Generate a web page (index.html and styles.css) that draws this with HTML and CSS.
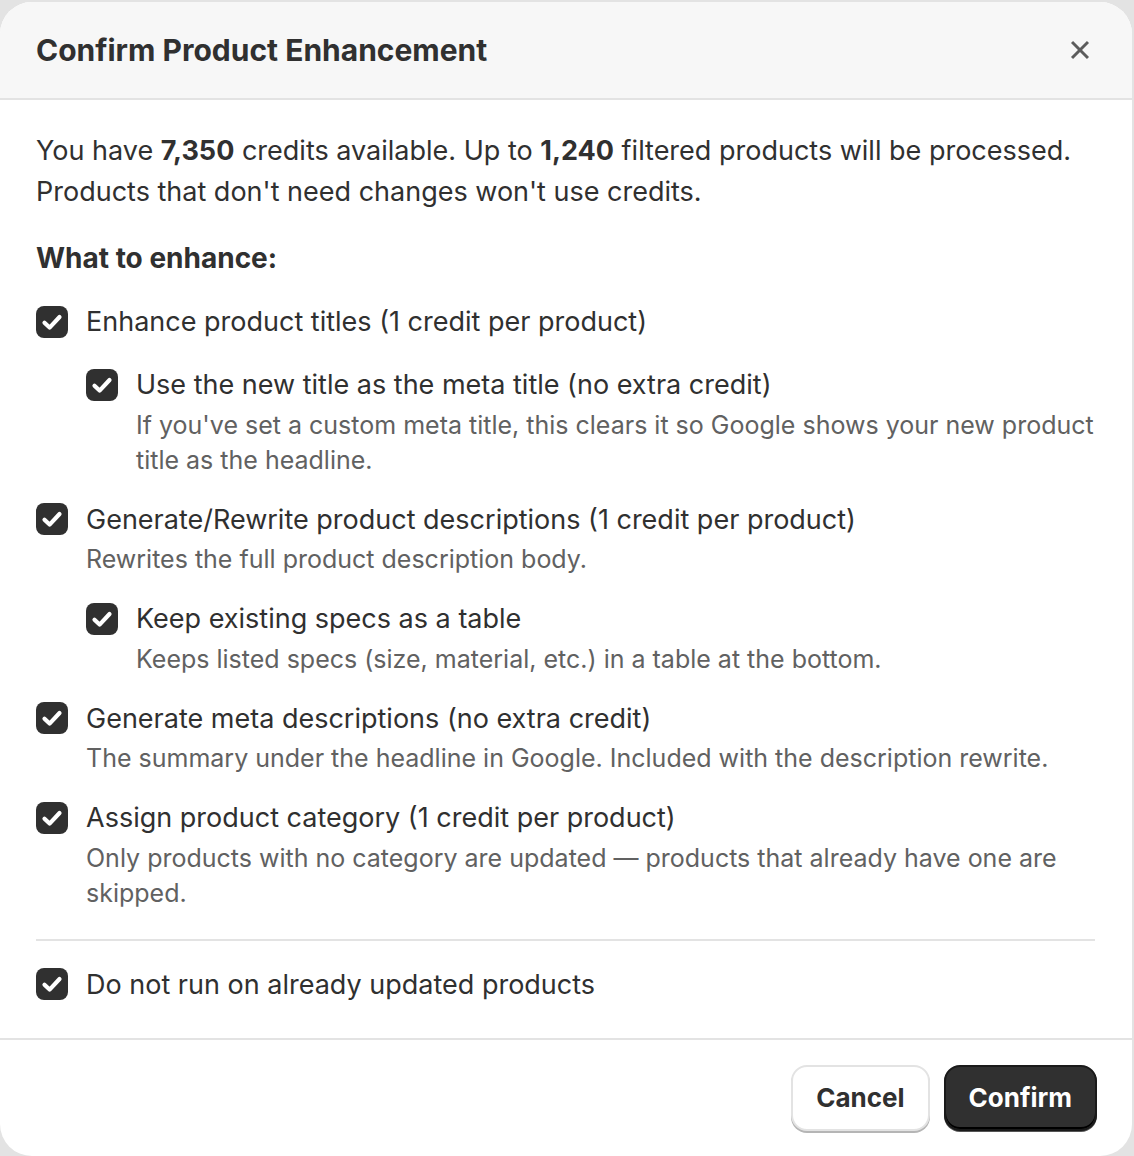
FILE: index.html
```html
<!DOCTYPE html>
<html>

<head>
    <meta name="viewport" content="width=device-width, initial-scale=1.0" charset="utf-8">
    <title>Confirm Product Enhancement</title>
    <link rel="stylesheet" href="styles.css">
</head>

<body>
    <div class="modal">
        <div class="modal-header">
            <h2>Confirm Product Enhancement</h2>
            <button class="close" aria-label="Close">
                <svg viewBox="0 0 20 20" width="28" height="28"><path d="M4.3 4.3l11.4 11.4M15.7 4.3L4.3 15.7" /></svg>
            </button>
        </div>

        <div class="modal-body">
            <p class="intro">
                You have <b>7,350</b> credits available. Up to <b>1,240</b> filtered products will be processed.
                Products that don't need changes won't use credits.
            </p>

            <h3>What to enhance:</h3>

            <div class="options">
                <div class="option">
                    <label class="check"><span class="box"></span>Enhance product titles (1 credit per product)</label>
                    <div class="option nested">
                        <label class="check"><span class="box"></span>Use the new title as the meta title (no extra credit)</label>
                        <p class="help">If you've set a custom meta title, this clears it so Google shows your new product title as the headline.</p>
                    </div>
                </div>

                <div class="option">
                    <label class="check"><span class="box"></span>Generate/Rewrite product descriptions (1 credit per product)</label>
                    <p class="help">Rewrites the full product description body.</p>
                    <div class="option nested">
                        <label class="check"><span class="box"></span>Keep existing specs as a table</label>
                        <p class="help">Keeps listed specs (size, material, etc.) in a table at the bottom.</p>
                    </div>
                </div>

                <div class="option">
                    <label class="check"><span class="box"></span>Generate meta descriptions (no extra credit)</label>
                    <p class="help">The summary under the headline in Google. Included with the description rewrite.</p>
                </div>

                <div class="option">
                    <label class="check"><span class="box"></span>Assign product category (1 credit per product)</label>
                    <p class="help">Only products with no category are updated — products that already have one are skipped.</p>
                </div>
            </div>

            <hr>

            <label class="check"><span class="box"></span>Do not run on already updated products</label>
        </div>

        <div class="modal-footer">
            <button class="button secondary">Cancel</button>
            <button class="button primary">Confirm</button>
        </div>
    </div>
</body>
</html>
```

FILE: styles.css
```css
* {
  box-sizing: border-box;
}
body {
  margin: 0;
  background: #e3e3e3;
  font-family: Inter, "Noto Sans", sans-serif;
  color: #303030;
  height: 1156px;
  overflow: hidden;
}
.modal {
  margin: 2px 2px 0 0;
  height: 1154px;
  background: #fff;
  border-radius: 32px;
  overflow: hidden;
  display: flex;
  flex-direction: column;
}
.modal-header {
  height: 98px;
  flex: none;
  display: flex;
  align-items: center;
  justify-content: space-between;
  padding: 0 32px 0 36px;
  background: #f7f7f7;
  border-bottom: 2px solid #e3e3e3;
}
.modal-header h2 {
  margin: 0;
  font-size: 30px;
  font-weight: 700;
}
.close {
  background: none;
  border: none;
  padding: 0;
  width: 40px;
  height: 40px;
  display: flex;
  align-items: center;
  justify-content: center;
  cursor: pointer;
}
.close svg {
  stroke: #5c5c5c;
  stroke-width: 2.1;
  fill: none;
}
.modal-body {
  padding: 30px 37px 33px 36px;
  font-size: 27px;
  line-height: 41px;
}
.intro {
  margin: 0;
}
.intro b {
  font-weight: 700;
}
h3 {
  margin: 26px 0 0;
  font-size: 28px;
  font-weight: 700;
  line-height: 41px;
}
.options {
  display: flex;
  flex-direction: column;
  gap: 21px;
  margin-top: 22px;
}
.option {
  display: flex;
  flex-direction: column;
}
.option.nested {
  margin-left: 50px;
  margin-top: 22px;
}
.help + .option.nested {
  margin-top: 21px;
}
.check {
  display: flex;
  align-items: center;
  gap: 18px;
  min-height: 41px;
}
.box {
  flex: none;
  width: 32px;
  height: 32px;
  border-radius: 8px;
  background: #303030 url("data:image/svg+xml;utf8,<svg xmlns='http://www.w3.org/2000/svg' viewBox='0 0 20 20'><path d='M5.3 10.4l3.2 3.1 6.2-6.6' fill='none' stroke='white' stroke-width='2.6' stroke-linecap='round' stroke-linejoin='round'/></svg>") center / 100% no-repeat;
}
.help {
  margin: 2.5px 0 0 50px;
  color: #616161;
  font-size: 25px;
  line-height: 35px;
}
hr {
  border: none;
  border-top: 2px solid #e3e3e3;
  margin: 28px 0 23px;
}
.modal-footer {
  flex: none;
  border-top: 2px solid #e3e3e3;
  display: flex;
  justify-content: flex-end;
  gap: 14px;
  padding: 25px 35px;
}
.button {
  font-family: inherit;
  font-size: 26px;
  font-weight: 700;
  height: 66px;
  padding: 0 23px;
  border-radius: 16px;
  cursor: pointer;
}
.secondary {
  background: #fff;
  color: #303030;
  border: 2px solid #e3e3e3;
  box-shadow: 0 2px 0 #b5b5b5;
}
.primary {
  background: #303030;
  color: #fff;
  border: 2px solid #1a1a1a;
  box-shadow: inset 0 -2px 0 #000, 0 1px 0 #555;
}
```
